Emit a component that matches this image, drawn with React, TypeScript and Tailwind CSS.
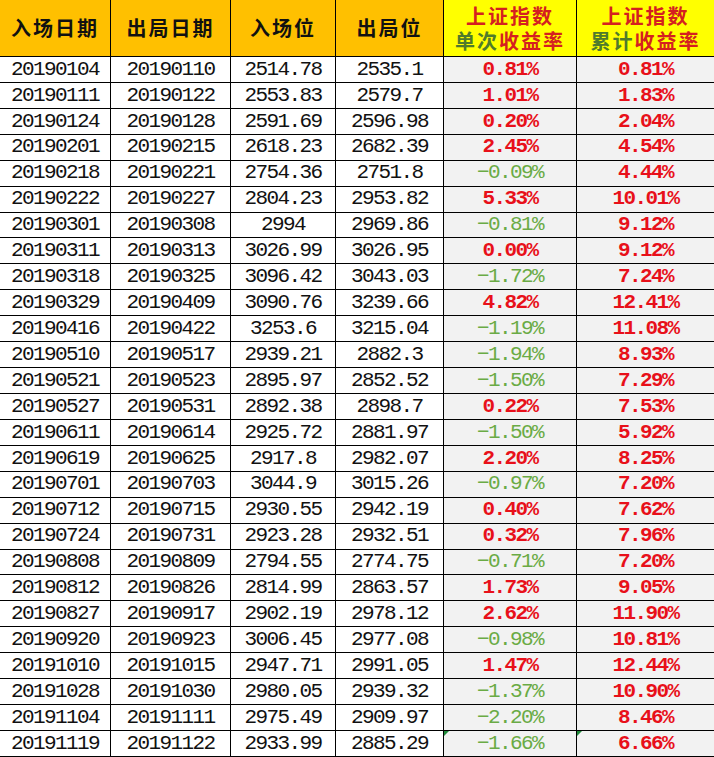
import React from "react";

type Row = [string, string, string, string, string, string];

const rows: Row[] = [
  ["20190104", "20190110", "2514.78", "2535.1", "0.81%", "0.81%"],
  ["20190111", "20190122", "2553.83", "2579.7", "1.01%", "1.83%"],
  ["20190124", "20190128", "2591.69", "2596.98", "0.20%", "2.04%"],
  ["20190201", "20190215", "2618.23", "2682.39", "2.45%", "4.54%"],
  ["20190218", "20190221", "2754.36", "2751.8", "-0.09%", "4.44%"],
  ["20190222", "20190227", "2804.23", "2953.82", "5.33%", "10.01%"],
  ["20190301", "20190308", "2994", "2969.86", "-0.81%", "9.12%"],
  ["20190311", "20190313", "3026.99", "3026.95", "0.00%", "9.12%"],
  ["20190318", "20190325", "3096.42", "3043.03", "-1.72%", "7.24%"],
  ["20190329", "20190409", "3090.76", "3239.66", "4.82%", "12.41%"],
  ["20190416", "20190422", "3253.6", "3215.04", "-1.19%", "11.08%"],
  ["20190510", "20190517", "2939.21", "2882.3", "-1.94%", "8.93%"],
  ["20190521", "20190523", "2895.97", "2852.52", "-1.50%", "7.29%"],
  ["20190527", "20190531", "2892.38", "2898.7", "0.22%", "7.53%"],
  ["20190611", "20190614", "2925.72", "2881.97", "-1.50%", "5.92%"],
  ["20190619", "20190625", "2917.8", "2982.07", "2.20%", "8.25%"],
  ["20190701", "20190703", "3044.9", "3015.26", "-0.97%", "7.20%"],
  ["20190712", "20190715", "2930.55", "2942.19", "0.40%", "7.62%"],
  ["20190724", "20190731", "2923.28", "2932.51", "0.32%", "7.96%"],
  ["20190808", "20190809", "2794.55", "2774.75", "-0.71%", "7.20%"],
  ["20190812", "20190826", "2814.99", "2863.57", "1.73%", "9.05%"],
  ["20190827", "20190917", "2902.19", "2978.12", "2.62%", "11.90%"],
  ["20190920", "20190923", "3006.45", "2977.08", "-0.98%", "10.81%"],
  ["20191010", "20191015", "2947.71", "2991.05", "1.47%", "12.44%"],
  ["20191028", "20191030", "2980.05", "2939.32", "-1.37%", "10.90%"],
  ["20191104", "20191111", "2975.49", "2909.97", "-2.20%", "8.46%"],
  ["20191119", "20191122", "2933.99", "2885.29", "-1.66%", "6.66%"],
];

const cjk = "font-['Noto_Sans_CJK_SC',sans-serif]";
const mono = "font-['Liberation_Mono',monospace]";

function Corner() {
  return (
    <span className="absolute left-0 top-0 w-0 h-0 border-t-[5px] border-r-[5px] border-t-[#1f8a3a] border-r-transparent" />
  );
}

export default function App() {
  return (
    <div className="w-[714px] h-[757px] overflow-hidden bg-white">
      <div className="grid grid-cols-[111px_120px_105px_108px_133px_137px]">
        {["入场日期", "出局日期", "入场位", "出局位"].map((h) => (
          <div
            key={h}
            className={`h-[57px] bg-[#ffc000] border-r border-b border-black flex items-center justify-center text-[20px] font-bold tracking-[2px] text-[#111] ${cjk}`}
          >
            {h}
          </div>
        ))}
        <div className={`h-[57px] bg-[#ffff00] border-r border-b border-black flex flex-col items-center justify-center text-[20px] leading-[25px] font-bold tracking-[2px] ${cjk}`}>
          <span className="text-[#d42020]">上证指数</span>
          <span>
            <span className="text-[#4f7a2c]">单次</span>
            <span className="text-[#d42020]">收益率</span>
          </span>
        </div>
        <div className={`h-[57px] bg-[#ffff00] border-b border-black flex flex-col items-center justify-center text-[20px] leading-[25px] font-bold tracking-[2px] ${cjk}`}>
          <span className="text-[#d42020]">上证指数</span>
          <span>
            <span className="text-[#4f7a2c]">累计</span>
            <span className="text-[#d42020]">收益率</span>
          </span>
        </div>

        {rows.map((r, i) => {
          const neg = r[4].startsWith("-");
          const last = i === rows.length - 1;
          return (
            <React.Fragment key={r[0]}>
              {r.slice(0, 4).map((c, j) => (
                <div
                  key={j}
                  className={`h-[25.93px] border-r border-b border-black flex items-center justify-center text-[21px] tracking-[-1.6px] text-[#111] ${mono}`}
                >
                  {c}
                </div>
              ))}
              <div
                className={`relative h-[25.93px] border-r border-b border-black bg-[#f2f2f2] flex items-center justify-center text-[21px] tracking-[-1.6px] ${mono} ${
                  neg ? "text-[#6aab45]" : "text-[#e8101a] font-bold"
                }`}
              >
                {last && <Corner />}
                {neg ? "−" + r[4].slice(1) : r[4]}
              </div>
              <div
                className={`relative h-[25.93px] border-b border-black bg-[#f2f2f2] flex items-center justify-center text-[21px] tracking-[-1.6px] font-bold text-[#e8101a] ${mono}`}
              >
                {last && <Corner />}
                {r[5]}
              </div>
            </React.Fragment>
          );
        })}
      </div>
    </div>
  );
}
